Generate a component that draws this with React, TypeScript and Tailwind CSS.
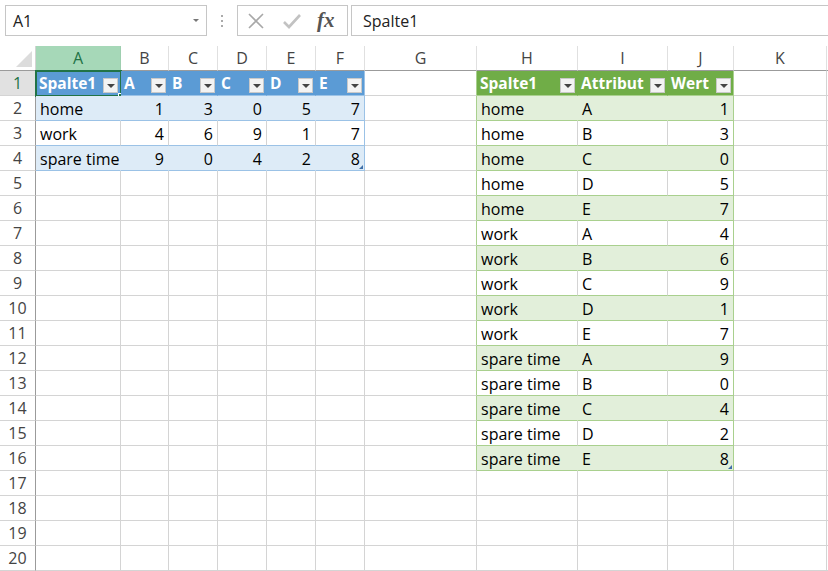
import React from "react";

const COLS = ["A", "B", "C", "D", "E", "F", "G", "H", "I", "J", "K"];

const WIDTHS: Record<string, string> = {
  A: "w-[85px]",
  B: "w-[48px]",
  C: "w-[49px]",
  D: "w-[49px]",
  E: "w-[49px]",
  F: "w-[49px]",
  G: "w-[112px]",
  H: "w-[101px]",
  I: "w-[90px]",
  J: "w-[66px]",
  K: "w-[93px]",
};

const LEFT = [
  ["Spalte1", "A", "B", "C", "D", "E"],
  ["home", "1", "3", "0", "5", "7"],
  ["work", "4", "6", "9", "1", "7"],
  ["spare time", "9", "0", "4", "2", "8"],
];

// unpivoted version of LEFT
const RIGHT: string[][] = [["Spalte1", "Attribut", "Wert"]];
LEFT.slice(1).forEach((row) => {
  LEFT[0].slice(1).forEach((attr, i) => RIGHT.push([row[0], attr, row[i + 1]]));
});

type Style = {
  head: string;
  band: string;
  line: string;
  lineB: string;
  headR: string;
  bandR: string;
};

const BLUE: Style = {
  head: "bg-[#5b9bd5]",
  band: "bg-[#ddebf7]",
  line: "border-r-[#9bc2e6]",
  lineB: "border-b-[#9bc2e6]",
  headR: "border-r-[#5b9bd5]",
  bandR: "border-r-[#ddebf7]",
};

const GREEN: Style = {
  head: "bg-[#70ad47]",
  band: "bg-[#e2efda]",
  line: "border-r-[#a9d08e]",
  lineB: "border-b-[#a9d08e]",
  headR: "border-r-[#70ad47]",
  bandR: "border-r-[#e2efda]",
};

function tableAt(r: number, c: number) {
  if (r >= 1 && r <= 4 && c <= 5)
    return { s: BLUE, text: LEFT[r - 1][c], last: c === 5, num: r > 1 && c > 0 };
  if (r >= 1 && r <= 16 && c >= 7 && c <= 9)
    return { s: GREEN, text: RIGHT[r - 1][c - 7], last: c === 9, num: r > 1 && c === 9 };
  return null;
}

function FilterButton() {
  return (
    <span className="mt-[2px] flex h-[15px] w-[15px] shrink-0 items-center justify-center border border-[#c9c9c9] bg-[#f3f3f3]">
      <span className="mt-[1px] h-0 w-0 border-x-[4px] border-t-[4px] border-x-transparent border-t-[#444]" />
    </span>
  );
}

function Cell({ r, c }: { r: number; c: number }) {
  const col = COLS[c];
  const t = tableAt(r, c);
  const header = r === 1;
  const band = r % 2 === 0;

  let bg = "bg-white";
  let br = "border-r-[#d4d4d4]";
  let bb = "border-b-[#d4d4d4]";
  if (t) {
    bg = header ? t.s.head : band ? t.s.band : "bg-white";
    br = t.last ? t.s.line : header ? t.s.headR : band ? t.s.bandR : "border-r-[#d4d4d4]";
    bb = t.s.lineB;
  } else if (c === 6 && r <= 16) {
    br = GREEN.line;
  }

  const selected = r === 1 && c === 0;
  const lastOfTable = t && t.last && ((t.s === BLUE && r === 4) || (t.s === GREEN && r === 16));

  return (
    <div
      className={`relative flex h-[25px] shrink-0 items-center border-r border-b ${WIDTHS[col]} ${bg} ${br} ${bb}`}
    >
      {t && header && (
        <div className="flex w-full items-center justify-between gap-[2px] pl-[3px] pr-[2px] pt-[2px] text-[15.5px] font-bold text-white">
          <span className="whitespace-nowrap leading-none">{t.text}</span>
          <FilterButton />
        </div>
      )}
      {t && !header && (
        <div
          className={`w-full whitespace-nowrap px-[4px] pt-[2px] leading-none text-black ${
            t.num ? "text-right" : "text-left"
          }`}
        >
          {t.text}
        </div>
      )}
      {selected && (
        <div className="pointer-events-none absolute -left-[1px] -top-[1px] h-[27px] w-[87px] border-2 border-[#217346]">
          <div className="absolute -bottom-[4px] -right-[4px] h-[6px] w-[6px] border border-white bg-[#217346]" />
        </div>
      )}
      {lastOfTable && (
        <div className="absolute bottom-[1px] right-[1px] h-0 w-0 border-l-[4px] border-b-[4px] border-l-transparent border-b-[#3f6fa8]" />
      )}
    </div>
  );
}

function FormulaBar() {
  return (
    <div className="flex h-[46px] items-start pt-[5px] text-[16px] text-[#222]">
      <div className="ml-[5px] flex h-[31px] w-[202px] items-center justify-between border border-[#c6c6c6] pl-[7px] pr-[7px]">
        <span>A1</span>
        <span className="h-0 w-0 border-x-[3px] border-t-[3px] border-x-transparent border-t-[#777]" />
      </div>
      <div className="flex h-[31px] w-[30px] flex-col items-center justify-center gap-[3px]">
        <span className="h-[2px] w-[2px] bg-[#aaa]" />
        <span className="h-[2px] w-[2px] bg-[#aaa]" />
        <span className="h-[2px] w-[2px] bg-[#aaa]" />
      </div>
      <div className="flex h-[31px] w-[111px] items-center border border-[#c6c6c6]">
        <svg width="16" height="16" viewBox="0 0 16 16" className="ml-[10px]">
          <path d="M1 1 L15 15 M15 1 L1 15" stroke="#a8a8a8" strokeWidth="1.6" fill="none" />
        </svg>
        <svg width="18" height="16" viewBox="0 0 18 16" className="ml-[19px]">
          <path d="M1 9 L6 14 L17 2" stroke="#c2c2c2" strokeWidth="2.6" fill="none" />
        </svg>
        <span className="ml-[16px] font-['Liberation_Serif',serif] text-[21px] font-bold italic leading-none text-[#555]">
          fx
        </span>
      </div>
      <div className="ml-[3px] flex h-[31px] flex-1 items-center border border-r-0 border-[#c6c6c6] pl-[11px]">
        Spalte1
      </div>
    </div>
  );
}

export default function App() {
  const rows = Array.from({ length: 20 }, (_, i) => i + 1);

  return (
    <div className="h-[571px] w-[828px] overflow-hidden bg-white font-['Open_Sans',sans-serif] text-[16px]">
      <FormulaBar />

      {/* column headers */}
      <div className="flex">
        <div className="relative h-[25px] w-[36px] shrink-0 border-r border-b border-r-[#d4d4d4] border-b-[#9b9b9b]">
          <svg width="16" height="16" viewBox="0 0 16 16" className="absolute bottom-[3px] right-[3px]">
            <path d="M16 0 L16 16 L0 16 Z" fill="#dcdcdc" />
          </svg>
        </div>
        {COLS.map((col) => (
          <div
            key={col}
            className={`flex h-[25px] shrink-0 items-center justify-center border-r border-b ${WIDTHS[col]} ${
              col === "A"
                ? "border-r-[#9fcfb0] border-b-[#217346] bg-[#a6d8b8] text-[#217346]"
                : "border-r-[#e0e0e0] border-b-[#9b9b9b] text-[#444]"
            }`}
          >
            {col}
          </div>
        ))}
        <div className="h-[25px] flex-1 border-b border-b-[#9b9b9b]" />
      </div>

      {rows.map((r) => (
        <div key={r} className="flex">
          <div
            className={`flex h-[25px] w-[36px] shrink-0 items-center justify-center border-r border-b border-b-[#d4d4d4] ${
              r === 1
                ? "border-r-[#217346] bg-[#e1e1e1] text-[#217346]"
                : "border-r-[#9b9b9b] text-[#444]"
            }`}
          >
            {r}
          </div>
          {COLS.map((_, c) => (
            <Cell key={c} r={r} c={c} />
          ))}
          <div className="h-[25px] flex-1 border-b border-b-[#d4d4d4]" />
        </div>
      ))}
    </div>
  );
}
